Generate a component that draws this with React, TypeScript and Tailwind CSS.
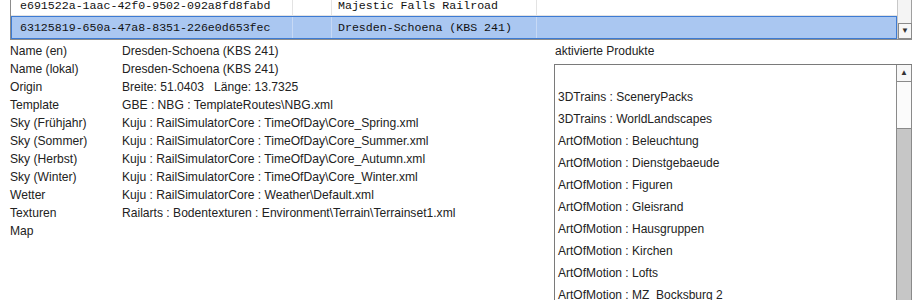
import React from "react";

const details: [string, string][] = [
  ["Name (en)", "Dresden-Schoena (KBS 241)"],
  ["Name (lokal)", "Dresden-Schoena (KBS 241)"],
  ["Origin", "Breite: 51.0403   Länge: 13.7325"],
  ["Template", "GBE : NBG : TemplateRoutes\\NBG.xml"],
  ["Sky (Frühjahr)", "Kuju : RailSimulatorCore : TimeOfDay\\Core_Spring.xml"],
  ["Sky (Sommer)", "Kuju : RailSimulatorCore : TimeOfDay\\Core_Summer.xml"],
  ["Sky (Herbst)", "Kuju : RailSimulatorCore : TimeOfDay\\Core_Autumn.xml"],
  ["Sky (Winter)", "Kuju : RailSimulatorCore : TimeOfDay\\Core_Winter.xml"],
  ["Wetter", "Kuju : RailSimulatorCore : Weather\\Default.xml"],
  ["Texturen", "Railarts : Bodentexturen : Environment\\Terrain\\Terrainset1.xml"],
  ["Map", ""],
];

const products = [
  "",
  "3DTrains : SceneryPacks",
  "3DTrains : WorldLandscapes",
  "ArtOfMotion : Beleuchtung",
  "ArtOfMotion : Dienstgebaeude",
  "ArtOfMotion : Figuren",
  "ArtOfMotion : Gleisrand",
  "ArtOfMotion : Hausgruppen",
  "ArtOfMotion : Kirchen",
  "ArtOfMotion : Lofts",
  "ArtOfMotion : MZ_Bocksburg 2",
];

const sans = { fontFamily: '"Liberation Sans", Arial, sans-serif' };

export default function App() {
  return (
    <div
      className="w-[921px] h-[300px] overflow-hidden bg-white text-[#222] text-[12px]"
      style={sans}
    >
      {/* top grid */}
      <div className="ml-[10px] w-[902px] h-[40px] flex border-l border-b border-[#8c8c8c]">
        <div className="flex-1 h-[39px] overflow-hidden font-['Liberation_Mono',monospace] text-[11.6px] text-[#111]">
          <div className="-mt-[4px]">
            <div className="flex h-[20px] border-b border-[#e3e3e3] items-center">
              <div className="w-[282px] pl-[9px] border-r border-[#e3e3e3] h-full flex items-center">
                e691522a-1aac-42f0-9502-092a8fd8fabd
              </div>
              <div className="w-[39px] border-r border-[#e3e3e3] h-full" />
              <div className="w-[205px] pl-[6px] border-r border-[#e3e3e3] h-full flex items-center">
                Majestic Falls Railroad
              </div>
              <div className="flex-1 h-full" />
            </div>
            <div className="flex h-[23px] items-center bg-[#aac7f1] border border-[#3d7bd3]">
              <div className="w-[281px] pl-[8px] border-r border-[#c7d9f5] h-full flex items-center">
                63125819-650a-47a8-8351-226e0d653fec
              </div>
              <div className="w-[39px] border-r border-[#c7d9f5] h-full" />
              <div className="w-[205px] pl-[6px] border-r border-[#c7d9f5] h-full flex items-center">
                Dresden-Schoena (KBS 241)
              </div>
              <div className="flex-1 h-full" />
            </div>
          </div>
        </div>
        <div className="w-[15px] h-[39px] flex flex-col bg-[#f4f4f4] border-l border-[#c8c8c8]">
          <div className="flex-1 border-r border-[#a0a0a0]" />
          <div className="h-[16px] flex items-center justify-center bg-[#f7f7f7] border border-[#8a8a8a] text-[8px] text-[#333] leading-none">
            ▼
          </div>
        </div>
      </div>

      {/* lower section */}
      <div className="flex pt-[2px]">
        <div className="w-[554px] pl-[10px]">
          {details.map(([k, v]) => (
            <div key={k} className="flex h-[18px] items-center whitespace-pre text-[12.1px]">
              <div className="w-[112px]">{k}</div>
              <div>{v}</div>
            </div>
          ))}
        </div>
        <div className="w-[358px]">
          <div className="h-[18px] flex items-center pl-[1px]">aktivierte Produkte</div>
          <div className="mt-[4px] h-[300px] flex border border-[#7a7a7a] border-r-0">
            <div className="flex-1 overflow-hidden -mt-[1px]">
              {products.map((p, i) => (
                <div key={i} className="h-[22px] flex items-center pl-[3px] whitespace-pre">
                  {p}
                </div>
              ))}
            </div>
            <div className="w-[16px] flex flex-col border-l border-[#8a8a8a] border-r border-r-[#8a8a8a] bg-[#c6c6c6]">
              <div className="h-[17px] flex items-center justify-center bg-[#f7f7f7] border-b border-[#8a8a8a] text-[8px] text-[#333] leading-none">
                ▲
              </div>
              <div className="h-[47px] bg-[#fbfbfb] border-b border-[#8a8a8a]" />
              <div className="flex-1" />
            </div>
          </div>
        </div>
      </div>
    </div>
  );
}
